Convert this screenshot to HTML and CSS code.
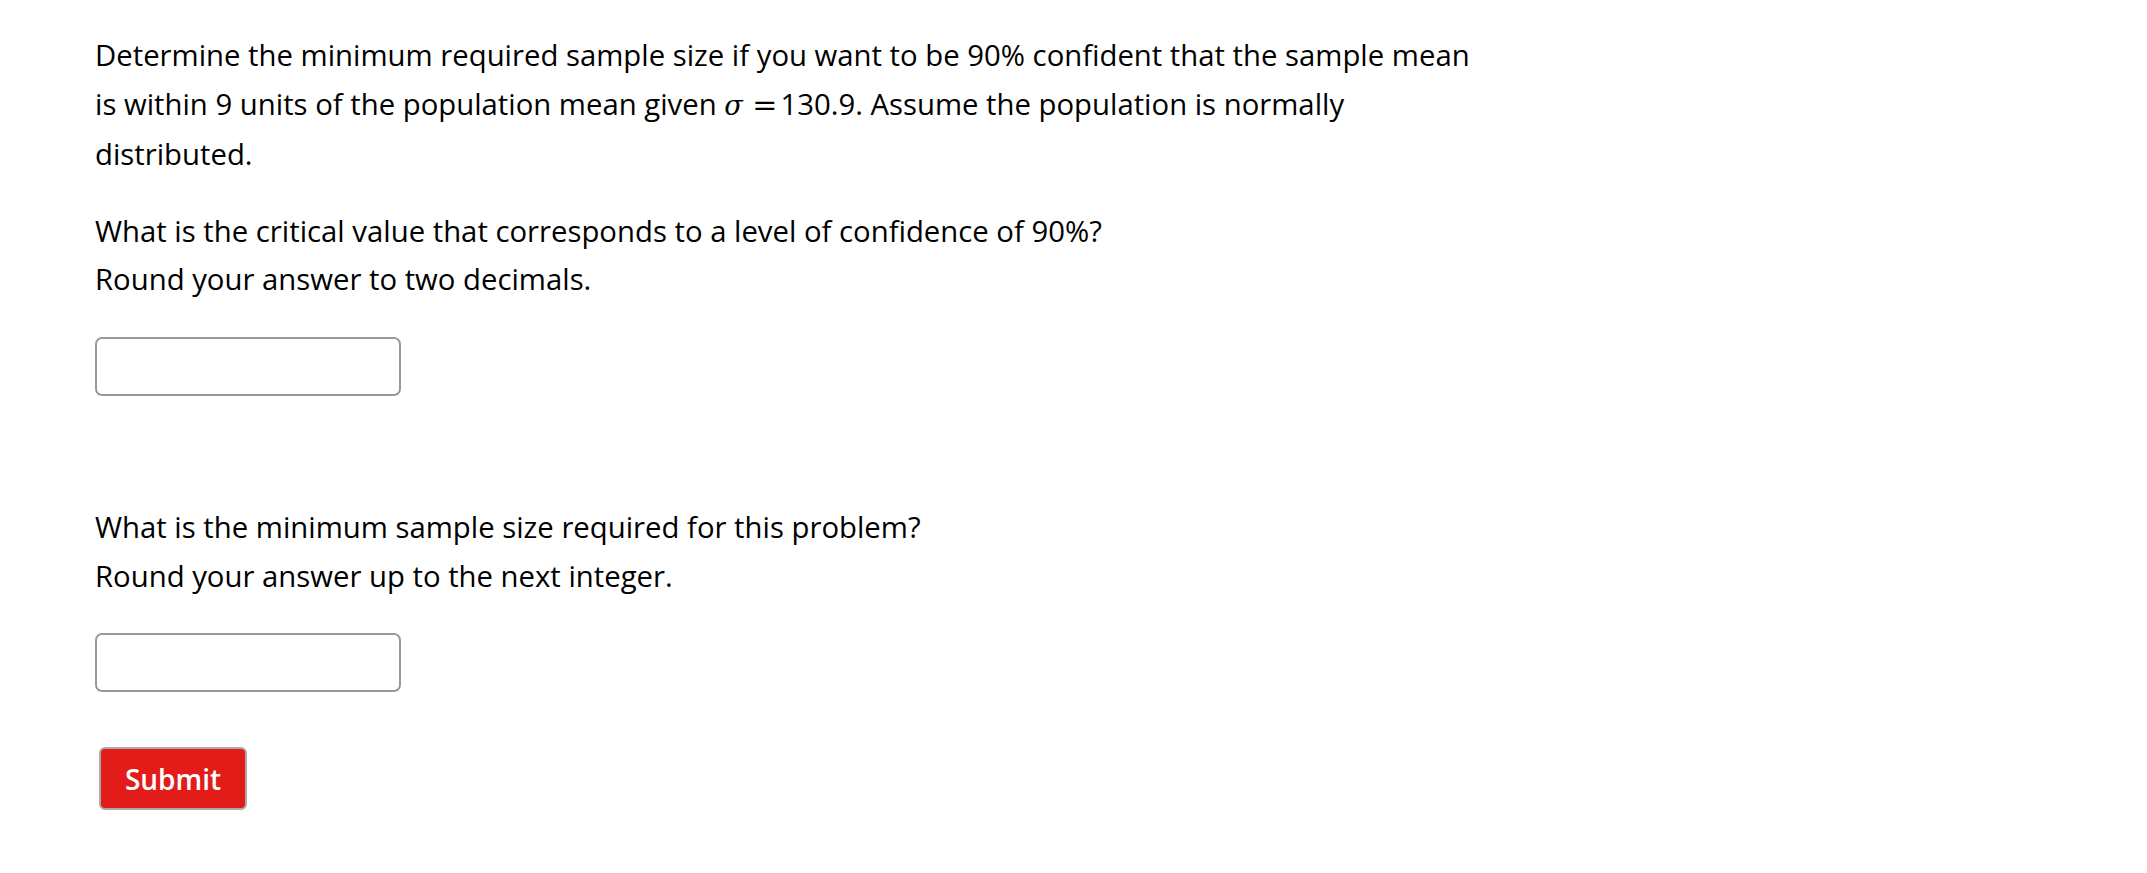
FILE: index.html
```html
<!DOCTYPE html>
<html>
<head>
<meta charset="utf-8">
<link rel="stylesheet" href="styles.css">
</head>
<body>
<main class="question">
  <p class="para">Determine the minimum required sample size if you want to be 90% confident that the sample mean<br>is within 9 units of the population mean given <span class="sym">σ</span> <span class="eq">=</span>130.9. Assume the population is normally<br>distributed.</p>
  <p class="para second">What is the critical value that corresponds to a level of confidence of 90%?<br>Round your answer to two decimals.</p>
  <input class="answer" type="text">
  <p class="para third">What is the minimum sample size required for this problem?<br>Round your answer up to the next integer.</p>
  <input class="answer" type="text">
  <div class="actions"><button class="submit" type="button">Submit</button></div>
</main>
</body>
</html>
```
FILE: styles.css
```css
html, body {
  margin: 0;
  padding: 0;
  background: #fff;
}
body {
  font-family: "Open Sans", "Liberation Sans", sans-serif;
  font-size: 29.3px;
  font-weight: 400;
  color: #000;
  -webkit-font-smoothing: antialiased;
}
.question {
  padding: 31px 0 0 95px;
  display: flex;
  flex-direction: column;
  align-items: flex-start;
}
.para {
  margin: 0;
  line-height: 48.6px;
}
.second {
  margin-top: 28px;
}
.third {
  margin-top: 107px;
}
.sym {
  font-family: "DejaVu Serif", "Liberation Serif", serif;
  font-style: italic;
  font-size: 27px;
}
.eq {
  font-family: "DejaVu Serif", "Liberation Serif", serif;
  font-size: 30px;
  margin: 0 3px 0 2px;
}
.answer {
  margin-top: 33px;
  width: 306px;
  height: 59px;
  box-sizing: border-box;
  border: 2px solid #999;
  border-radius: 7px;
  background: #fff;
  font: inherit;
  padding: 0 10px;
}
.actions {
  margin-top: 55px;
  padding-left: 4px;
}
.submit {
  width: 148px;
  height: 63px;
  box-sizing: border-box;
  background: #e31c19;
  color: #fff;
  border: 2px solid #aaa;
  border-radius: 6px;
  font-family: "Open Sans", "Liberation Sans", sans-serif;
  font-size: 28px;
  font-weight: 600;
  padding: 0;
  cursor: pointer;
}
```
